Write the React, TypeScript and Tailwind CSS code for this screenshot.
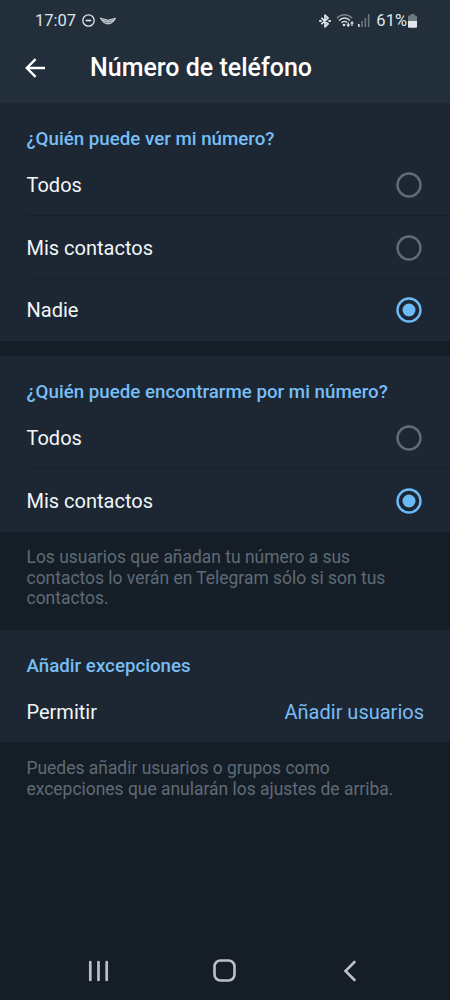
import React, { useState } from 'react';

type RadioRowProps = {
  label: string;
  checked: boolean;
  className: string;
  onSelect: () => void;
};

const StatusBar: React.FC = () => (
  <div className="flex h-[41px] items-center pl-[35px] pr-[33px] text-[#dfe6ec]">
    <span className="text-[16.5px] leading-5">17:07</span>
    {/* Do not disturb */}
    <svg className="ml-[6px] shrink-0" width="13" height="13" viewBox="0 0 13 13" fill="none" stroke="currentColor" strokeWidth="1.3">
      <circle cx="6.5" cy="6.5" r="5.7" />
      <path d="M3.7 6.5h5.6" strokeWidth="1.6" />
    </svg>
    {/* Wings */}
    <svg className="ml-[5px] shrink-0" width="16" height="8" viewBox="0 0 16 8" fill="none" stroke="currentColor" strokeLinecap="round">
      <path d="M.7 1.2C3 2.400 6 2 8 3.400 10 2 13 2.400 15.300 1.200 14 5 11 6.800 8 6.900 5 6.800 2 5 .7 1.200z" fill="currentColor" fillOpacity=".4" strokeWidth="1" strokeLinejoin="round" />
      <path d="M2.500 3.500C5 4.500 6.500 4.200 8 5.200 9.500 4.200 11 4.500 13.500 3.500" strokeWidth="1" />
    </svg>

    <div className="ml-auto flex items-center">
      {/* Bluetooth */}
      <svg className="shrink-0" width="12" height="14" viewBox="0 0 12 14" fill="none" stroke="currentColor" strokeWidth="1.7" strokeLinejoin="round">
        <path d="M2.300 3.800 9.100 9.900 6 12.900V1.100l3.100 3L2.300 10.200" />
        <path d="M.2 7h2.300M9.500 7h2.300" strokeWidth="2" />
      </svg>
      {/* Wi-Fi with traffic arrows */}
      <svg className="ml-[5px] shrink-0" width="19" height="15" viewBox="0 0 19 15" fill="none" stroke="currentColor">
        <path d="M1 5.200C5.200.7 11.800.7 16 5.200" strokeWidth="1.500" opacity=".45" />
        <path d="M3.200 7.500c3-3.200 7.600-3.200 10.600 0" strokeWidth="1.500" />
        <path d="M5.500 9.800c1.600-1.700 4.100-1.800 5.700-.3" strokeWidth="1.500" />
        <circle cx="8" cy="12" r="1.300" fill="currentColor" stroke="none" />
        <path d="M12.300 9.500v3M16 13V9.800" strokeWidth="1.200" />
        <path d="M10.300 11.500h4l-2 2.700zM14 10.600h4l-2-2.700z" fill="currentColor" stroke="none" />
      </svg>
      {/* Signal */}
      <svg className="ml-[3px] shrink-0" width="12" height="13" viewBox="0 0 12 13" fill="currentColor">
        <rect x="0" y="10" width="1.600" height="3" />
        <rect x="3.300" y="7" width="1.500" height="6" opacity=".4" />
        <rect x="6.600" y="4" width="1.500" height="9" opacity=".4" />
        <rect x="9.900" y="0" width="1.500" height="13" opacity=".4" />
      </svg>
      <span className="ml-[6px] text-[16.5px] leading-5">61%</span>
      {/* Battery */}
      <svg className="ml-px shrink-0" width="9" height="14" viewBox="0 0 9 14" fill="currentColor">
        <path d="M2.500 0h4v1.500H8a1 1 0 0 1 1 1V7H0V2.500a1 1 0 0 1 1-1h1.500z" opacity=".4" />
        <path d="M0 7h9v5.700a1 1 0 0 1-1 1H1a1 1 0 0 1-1-1z" />
      </svg>
    </div>
  </div>
);

const SectionTitle: React.FC<{ children: React.ReactNode }> = ({ children }) => (
  <h2 className="flex h-[51px] items-end pb-[3px] pl-[26.5px] text-[18.73px] font-medium leading-6 text-[#77bdf6]">
    {children}
  </h2>
);

const RadioRow: React.FC<RadioRowProps> = ({ label, checked, className, onSelect }) => (
  <button
    role="radio"
    aria-checked={checked}
    onClick={onSelect}
    className="flex w-full pl-[26.5px] text-left"
  >
    <span className={`flex flex-1 items-center justify-between border-[#17202a] pr-[28px] ${className}`}>
      <span className="text-[20px] leading-6 text-[#f2f6f9]">{label}</span>
      <svg
        className={checked ? 'text-[#6bb9f5]' : 'text-[#616c77]'}
        width="26"
        height="26"
        viewBox="0 0 26 26"
        fill="none"
      >
        <circle cx="13" cy="13" r="11.5" stroke="currentColor" strokeWidth="2.4" />
        {checked && <circle cx="13" cy="13" r="6.5" fill="currentColor" />}
      </svg>
    </span>
  </button>
);

const App: React.FC = () => {
  const [visibility, setVisibility] = useState('Nadie');
  const [discovery, setDiscovery] = useState('Mis contactos');

  const visibilityOptions = [
    { label: 'Todos', className: 'h-[62px] border-b' },
    { label: 'Mis contactos', className: 'h-[63px] border-b pt-px' },
    { label: 'Nadie', className: 'h-[62px]' },
  ];
  const discoveryOptions = [
    { label: 'Todos', className: 'h-[62px] border-b' },
    { label: 'Mis contactos', className: 'h-[63px]' },
  ];

  return (
    <div className="flex h-[1000px] w-full flex-col bg-[#151e26] font-['Roboto',sans-serif]">
      <header className="h-[103px] shrink-0 bg-[#222e3a]">
        <StatusBar />
        <div className="flex h-[54px] items-center pl-[25px]">
          <button aria-label="Atrás" className="text-white">
            <svg width="21" height="20" viewBox="0 0 21 20" fill="none" stroke="currentColor" strokeWidth="2.4">
              <path d="M20 10H2M10.600 1.200 1.800 10l8.800 8.800" />
            </svg>
          </button>
          <h1 className="ml-[44px] text-[25px] font-medium leading-8 text-white">Número de teléfono</h1>
        </div>
      </header>

      <main className="flex-1">
        <section className="bg-[#1d2733]">
          <SectionTitle>¿Quién puede ver mi número?</SectionTitle>
          {visibilityOptions.map((option) => (
            <RadioRow
              key={option.label}
              {...option}
              checked={visibility === option.label}
              onSelect={() => setVisibility(option.label)}
            />
          ))}
        </section>

        <section className="mt-[15px] bg-[#1d2733]">
          <SectionTitle>¿Quién puede encontrarme por mi número?</SectionTitle>
          {discoveryOptions.map((option) => (
            <RadioRow
              key={option.label}
              {...option}
              checked={discovery === option.label}
              onSelect={() => setDiscovery(option.label)}
            />
          ))}
        </section>
        <p className="h-[98px] pl-[26.5px] pr-[50px] pt-[15px] text-[17.45px] leading-[20.5px] text-[#5f6b76]">
          Los usuarios que añadan tu número a sus contactos lo verán en Telegram sólo si son tus contactos.
        </p>

        <section className="bg-[#1d2733]">
          <SectionTitle>Añadir excepciones</SectionTitle>
          <button className="flex h-[61px] w-full items-center justify-between pl-[26.5px] pr-[26px] text-[20px] leading-6">
            <span className="text-[#f2f6f9]">Permitir</span>
            <span className="text-[#77bdf6]">Añadir usuarios</span>
          </button>
        </section>
        <p className="pl-[26.5px] pr-[50px] pt-[16px] text-[17.45px] leading-[20.5px] text-[#5f6b76]">
          Puedes añadir usuarios o grupos como excepciones que anularán los ajustes de arriba.
        </p>
      </main>

      <nav className="flex h-[60px] shrink-0 items-center pl-[88px] pt-px text-[#b9c0ca]">
        <button aria-label="Recientes">
          <svg width="21" height="22" viewBox="0 0 21 22" stroke="currentColor" strokeWidth="2.7" strokeLinecap="round">
            <path d="M2.300 2v18M10.500 2v18M18.700 2v18" />
          </svg>
        </button>
        <button aria-label="Inicio" className="ml-[104px]">
          <svg width="23" height="23" viewBox="0 0 23 23" fill="none" stroke="currentColor" strokeWidth="2.6">
            <rect x="1.500" y="1.500" width="20" height="20" rx="6" />
          </svg>
        </button>
        <button aria-label="Volver" className="ml-[107px]">
          <svg width="14" height="22" viewBox="0 0 14 22" fill="none" stroke="currentColor" strokeWidth="2.6" strokeLinecap="round">
            <path d="M11.500 2 2.500 11l9 9" />
          </svg>
        </button>
      </nav>
    </div>
  );
};

export default App;
